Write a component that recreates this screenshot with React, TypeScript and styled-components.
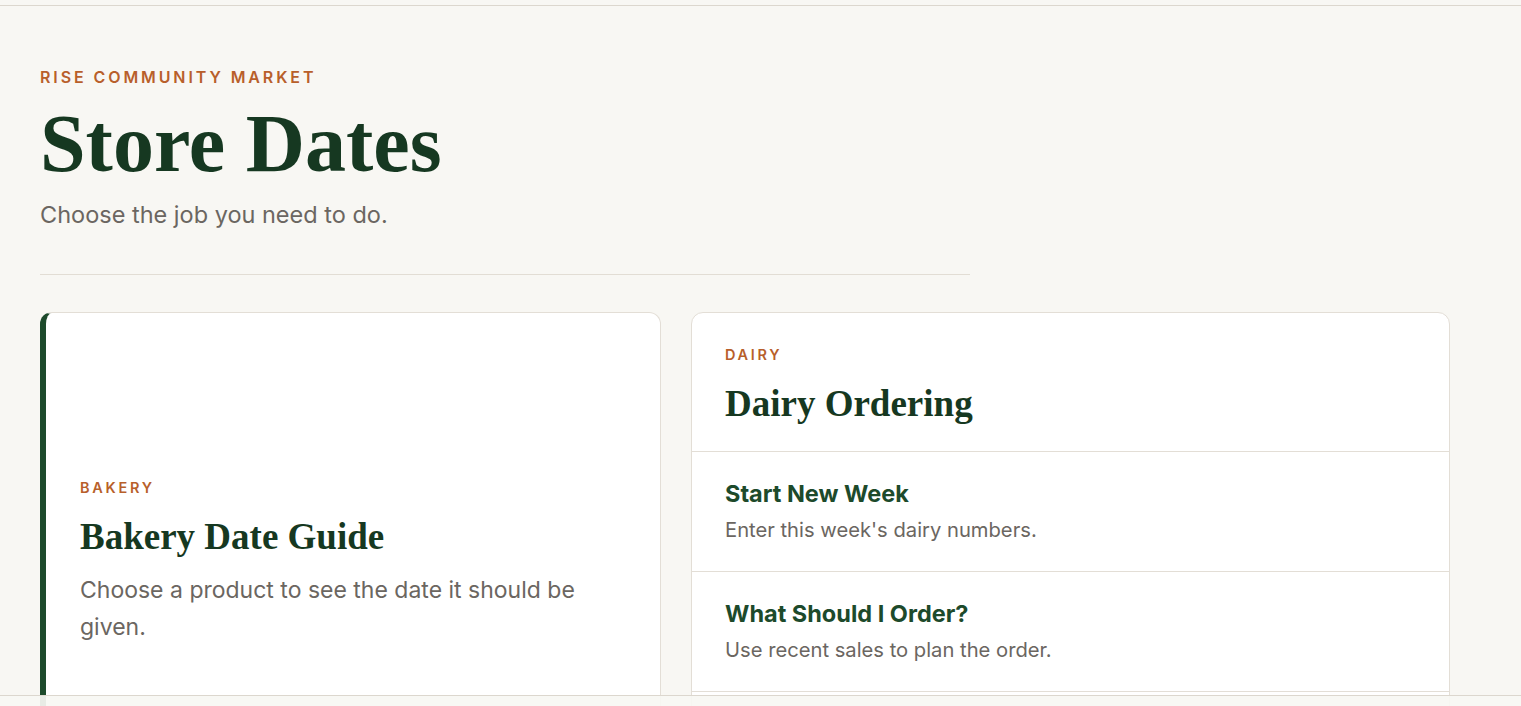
import React from "react";
import styled, { createGlobalStyle } from "styled-components";

type JobRow = {
  title: string;
  text: string;
};

const dairyJobs: JobRow[] = [
  { title: "Start New Week", text: "Enter this week's dairy numbers." },
  { title: "What Should I Order?", text: "Use recent sales to plan the order." },
  { title: "Past Weeks", text: "Look back at earlier dairy weeks." },
];

const App = () => {
  return (
    <>
      <GlobalStyle />
      <TopBar />
      <Page>
        <Header>
          <Eyebrow>Rise Community Market</Eyebrow>
          <PageTitle>Store Dates</PageTitle>
          <Lead>Choose the job you need to do.</Lead>
        </Header>
        <Cards>
          <FeatureCard>
            <Label>Bakery</Label>
            <CardTitle>Bakery Date Guide</CardTitle>
            <CardText>Choose a product to see the date it should be given.</CardText>
          </FeatureCard>
          <ListCard>
            <ListHead>
              <Label>Dairy</Label>
              <CardTitle>Dairy Ordering</CardTitle>
            </ListHead>
            {dairyJobs.map((job) => (
              <Row key={job.title}>
                <RowTitle>{job.title}</RowTitle>
                <RowText>{job.text}</RowText>
              </Row>
            ))}
          </ListCard>
        </Cards>
      </Page>
      <BottomBar />
    </>
  );
};
export default App;

const GlobalStyle = createGlobalStyle`
  * {
    box-sizing: border-box;
  }
  body {
    margin: 0;
    background: #f8f7f3;
    font-family: "Inter", "Liberation Sans", sans-serif;
    color: #1a3a24;
  }
`;
const TopBar = styled.div`
  height: 6px;
  border-bottom: 1px solid #dcd7ce;
`;
const Page = styled.main`
  padding: 62px 40px 120px;
`;
const Header = styled.header`
  width: 930px;
  padding-bottom: 44px;
  border-bottom: 1px solid #e2ddd4;
  margin-bottom: 37px;
`;
const Eyebrow = styled.p`
  margin: 0;
  font-size: 16px;
  line-height: 19px;
  font-weight: 600;
  letter-spacing: 2.9px;
  text-transform: uppercase;
  color: #b85f2b;
`;
const PageTitle = styled.h1`
  margin: 12px 0 11px;
  font-family: "Liberation Serif", serif;
  font-size: 82px;
  line-height: 90px;
  font-weight: 700;
  color: #163821;
`;
const Lead = styled.p`
  margin: 0;
  font-size: 23.5px;
  line-height: 30px;
  color: #6b6661;
`;
const Cards = styled.section`
  display: grid;
  grid-template-columns: 621px 759px;
  gap: 30px;
  align-items: stretch;
`;
const FeatureCard = styled.article`
  display: flex;
  flex-direction: column;
  justify-content: center;
  padding: 34px 34px;
  background: #fff;
  border: 1px solid #e3ded6;
  border-left: 6px solid #1d4a2b;
  border-radius: 12px;
`;
const ListCard = styled.article`
  background: #fff;
  border: 1px solid #e3ded6;
  border-radius: 12px;
  overflow: hidden;
`;
const ListHead = styled.div`
  padding: 33px 33px 24px;
  border-bottom: 1px solid #e3ded6;
`;
const Label = styled.p`
  margin: 0 0 18px;
  font-size: 14.5px;
  line-height: 17px;
  font-weight: 600;
  letter-spacing: 2.7px;
  text-transform: uppercase;
  color: #b85f2b;
`;
const CardTitle = styled.h2`
  margin: 0;
  font-family: "Liberation Serif", serif;
  font-size: 37px;
  line-height: 46px;
  font-weight: 700;
  color: #163821;
`;
const CardText = styled.p`
  margin: 12px 0 0;
  font-size: 23px;
  line-height: 37px;
  color: #6b6661;
`;
const Row = styled.div`
  height: 120px;
  padding: 27px 33px;
  border-bottom: 1px solid #e3ded6;
  &:last-child {
    border-bottom: none;
  }
`;
const RowTitle = styled.h3`
  margin: 0 0 8px;
  font-size: 23.5px;
  line-height: 30px;
  font-weight: 700;
  color: #1d4a2b;
`;
const RowText = styled.p`
  margin: 0;
  font-size: 20.2px;
  line-height: 26px;
  color: #6b6661;
`;
const BottomBar = styled.div`
  position: fixed;
  left: 0;
  right: 0;
  bottom: 0;
  height: 11px;
  background: rgba(248, 247, 243, 0.93);
  border-top: 1px solid #dcd7ce;
`;
